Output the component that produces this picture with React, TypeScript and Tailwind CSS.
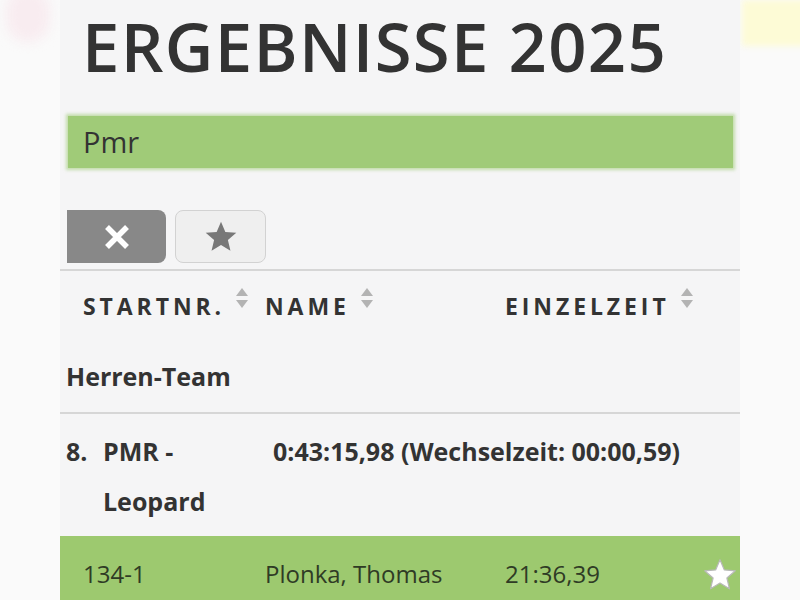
import React from "react";

const SortIcon = () => (
  <svg width="14" height="22" viewBox="0 0 14 22" className="inline-block ml-[10px] -mt-[4px] align-top">
    <path d="M7 1 L13 9 L1 9 Z" fill="#b3b3b3" />
    <path d="M7 21 L13 13 L1 13 Z" fill="#b3b3b3" />
  </svg>
);

const Star = ({ fill, stroke, size }: { fill: string; stroke?: string; size: number }) => (
  <svg width={size} height={size} viewBox="0 0 24 24">
    <path
      d="M12 1.8 L14.9 8.6 L22.2 9.2 L16.6 14 L18.3 21.2 L12 17.4 L5.7 21.2 L7.4 14 L1.8 9.2 L9.1 8.6 Z"
      fill={fill}
      stroke={stroke ?? "none"}
      strokeWidth="0.8"
      strokeLinejoin="round"
    />
  </svg>
);

export default function App() {
  return (
    <div className="relative w-[800px] h-[600px] overflow-hidden bg-[#fafafa] text-[#333]" style={{ fontFamily: '"Open Sans", "Noto Sans", sans-serif' }}>
      {/* blurred decoration at the corners */}
      <div className="absolute left-[6px] top-[-12px] w-[44px] h-[54px] rounded-full bg-[#f8ecf0] blur-[6px]" />
      <div className="absolute left-[742px] top-0 w-[70px] h-[46px] bg-[#fdfbd6] blur-[3px]" />

      <div className="relative ml-[60px] w-[680px] h-full bg-[#f5f5f6]">
        <h1 className="pl-[22px] pt-[4px] h-[100px] text-[67px] leading-[84px] font-semibold tracking-[0.02em] text-[#333]">
          ERGEBNISSE 2025
        </h1>

        <div className="ml-[8px] mr-[7px] mt-[16px] h-[52px] bg-[#a0cb78] shadow-[0_0_3px_2px_rgba(160,203,120,0.6)] flex items-center pl-[15px] text-[29px] text-[#333]">
          Pmr
        </div>

        <div className="flex gap-[9px] mt-[42px] ml-[7px]">
          <button className="w-[99px] h-[53px] bg-[#888888] rounded-r-[8px] flex items-center justify-center">
            <svg width="28" height="28" viewBox="0 0 28 28">
              <path d="M4 4 L24 24 M24 4 L4 24" stroke="#fff" strokeWidth="5.5" strokeLinecap="butt" />
            </svg>
          </button>
          <button className="w-[91px] h-[53px] bg-[#efefef] border border-[#d2d2d2] rounded-[8px] flex items-center justify-center">
            <Star fill="#787878" size={36} />
          </button>
        </div>

        <div className="mt-[6px] border-t-2 border-[#d6d6d6]">
          <div className="grid grid-cols-[182px_240px_1fr] pl-[23px] pt-[20px] h-[70px] text-[23px] font-bold tracking-[0.17em] uppercase text-[#333]">
            <div className="leading-[30px]">Startnr.<SortIcon /></div>
            <div className="leading-[30px]">Name<SortIcon /></div>
            <div className="leading-[30px]">Einzelzeit<SortIcon /></div>
          </div>
          <div className="pl-[6px] h-[71px] flex items-center text-[25px] font-bold">Herren-Team</div>
        </div>

        <div className="border-t-2 border-[#d6d6d6] pt-[12px] pb-[10px] flex text-[25px] font-bold leading-[50px]">
          <div className="w-[43px] pl-[6px]">8.</div>
          <div className="w-[170px]">PMR -<br />Leopard</div>
          <div>0:43:15,98 (Wechselzeit: 00:00,59)</div>
        </div>

        <div className="bg-[#9dc96f] h-[80px] grid grid-cols-[182px_240px_1fr_auto] pl-[23px] pr-[2px] pt-[20px] text-[24px] leading-[36px] text-[#2f3b25]">
          <div>134-1</div>
          <div>Plonka, Thomas</div>
          <div>21:36,39</div>
          <div className="pt-[1px]">
            <Star fill="#ffffff" stroke="#b9b9b9" size={36} />
          </div>
        </div>
      </div>
    </div>
  );
}
